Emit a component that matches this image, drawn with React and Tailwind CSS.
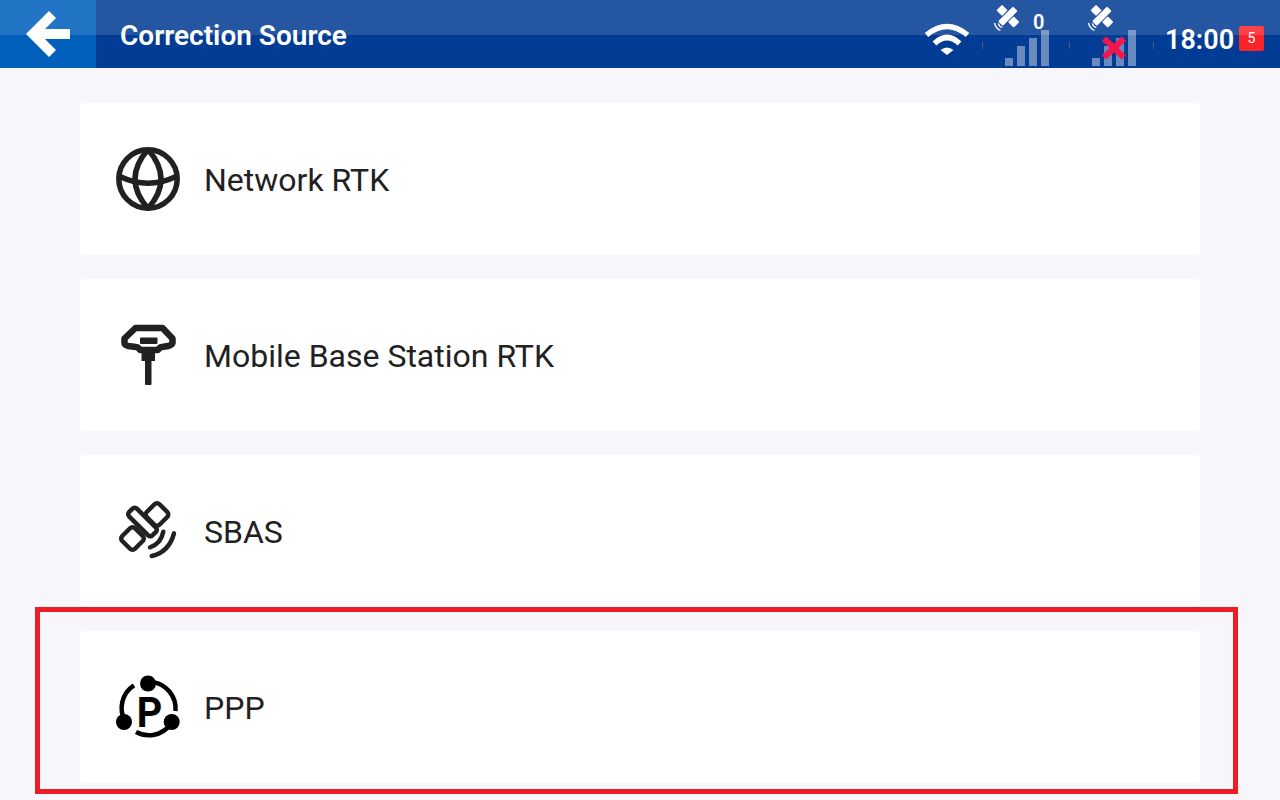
const DARK = "#212121";

function SmallSat({ x }) {
  return (
    <g transform={`translate(${x} 6)`} fill="#fff">
      <g transform="rotate(-45 13.7 10)">
        <rect x="3.2" y="7" width="21" height="6.5" rx="1" />
        <rect x="9.7" y="-2" width="8" height="8" rx="1" />
        <rect x="9.7" y="14.5" width="8" height="8" rx="1" />
      </g>
      <path d="M4.3 17.3 Q5 20.5 8.3 21.3" fill="none" stroke="#fff" strokeWidth="1.3" />
      <path d="M0.5 17 Q2 23 6.5 24.5" fill="none" stroke="#fff" strokeWidth="1.3" />
    </g>
  );
}

function Signal({ satX, cross, label }) {
  return (
    <div className="relative h-[68px] w-[70px]">
      <svg width="70" height="68" viewBox="0 0 70 68" className="block">
        <SmallSat x={satX} />
        <g fill="#fff" fillOpacity="0.4">
          <rect x="15" y="58" width="8" height="8" />
          <rect x="27" y="46" width="8" height="20" />
          <rect x="39" y="38" width="8" height="28" />
          <rect x="51" y="30" width="8" height="36" />
        </g>
        {cross && (
          <path d="M27 38.5 L47 57.5 M47 38.5 L27 57.5" fill="none" stroke="#f5164f" strokeWidth="6" />
        )}
      </svg>
      {label && (
        <span className="absolute left-[43px] top-[10px] text-[20px] leading-[24px] font-semibold text-white">{label}</span>
      )}
    </div>
  );
}

function Divider() {
  return <div className="mt-[42px] h-[7px] w-px bg-[#4a5f88]" />;
}

function GlobeIcon() {
  return (
    <svg width="64" height="64" viewBox="0 0 64 64" fill="none" stroke={DARK} strokeWidth="5.5">
      <circle cx="32" cy="32" r="29.2" />
      <path d="M32 2.5 Q6 32 32 61.5 Q58 32 32 2.5" />
      <path d="M4 29.5 Q32 43 60 29.5" />
    </svg>
  );
}

function BaseIcon() {
  return (
    <svg width="64" height="64" viewBox="0 0 64 64" fill="none">
      <path
        d="M19.5 5 H46.5 L56.5 15.5 V20 Q56 22 52 23 L46 24 Q44 24 42 27 H24 Q22 24 20 24 L12 23 Q8.5 22 8.5 20 V15.5 Z"
        stroke={DARK}
        strokeWidth="6.5"
        strokeLinejoin="round"
      />
      <rect x="24" y="14.5" width="17.5" height="6.5" rx="1" fill={DARK} />
      <rect x="25.5" y="27" width="13.5" height="11" fill={DARK} />
      <rect x="29" y="36" width="6.5" height="26" rx="1" fill={DARK} />
    </svg>
  );
}

function SatIcon() {
  return (
    <svg width="64" height="64" viewBox="0 0 64 64" fill="none" stroke={DARK} strokeWidth="4.5">
      <rect x="10" y="17.5" width="33" height="11" rx="3" transform="rotate(45 26.5 23)" />
      <rect x="32" y="6.5" width="18" height="18" rx="3.5" transform="rotate(45 41 15.5)" />
      <rect x="7.5" y="30.5" width="18" height="18" rx="3.5" transform="rotate(45 16.5 39.5)" />
      <path d="M34 48.3 Q45 45 47.3 32.7" strokeLinecap="round" />
      <path d="M35.7 57 Q53 53 58 34.3" strokeLinecap="round" />
    </svg>
  );
}

function PppIcon() {
  return (
    <svg width="64" height="64" viewBox="0 0 64 64" fill="none">
      <path d="M36 7 A27 27 0 0 1 59.5 36" stroke="#000" strokeWidth="4.5" />
      <path d="M54 50 A27 27 0 0 1 20 57" stroke="#000" strokeWidth="4.5" />
      <path d="M9 46 A27 27 0 0 1 18 10.3" stroke="#000" strokeWidth="4.5" />
      <circle cx="32" cy="8.5" r="8" fill="#000" />
      <circle cx="8" cy="47" r="8" fill="#000" />
      <circle cx="55.7" cy="47" r="8" fill="#000" />
      <text
        x="0"
        y="0"
        transform="translate(33.5 52) scale(0.92 1)"
        textAnchor="middle"
        fontFamily="Roboto, sans-serif"
        fontWeight="700"
        fontSize="43"
        fill="#000"
      >
        P
      </text>
    </svg>
  );
}

const rows = [
  { label: "Network RTK", Icon: GlobeIcon },
  { label: "Mobile Base Station RTK", Icon: BaseIcon },
  { label: "SBAS", Icon: SatIcon },
  { label: "PPP", Icon: PppIcon },
];

export default function App() {
  return (
    <div className="relative h-[800px] w-[1280px] overflow-hidden bg-[#f6f6fb] font-['Roboto',sans-serif]">
      <header className="relative flex h-[68px] bg-[#033c94]">
        <div className="w-24 bg-[#0060bb]">
          <svg width="96" height="68" viewBox="0 0 96 68" className="block">
            <path d="M26 34 L49 11 L56 18 L45 29 H70 V39 H45 L56 50 L49 57 Z" fill="#fff" />
          </svg>
        </div>
        <h1 className="ml-6 text-[28px] font-semibold leading-[72px] text-white">Correction Source</h1>
        <div className="ml-auto flex pr-4">
          <svg width="44" height="32" viewBox="0 0 44 32" fill="none" className="mt-[23px]">
            <path d="M1.5 12 Q22 -5 42.5 12" stroke="#fff" strokeWidth="5.5" />
            <path d="M9.5 20.5 Q22 8.5 34.5 20.5" stroke="#fff" strokeWidth="5.5" />
            <path d="M15.5 27 Q22 22 28.5 27 L22 32 Z" fill="#fff" />
          </svg>
          <div className="ml-[13px]"><Divider /></div>
          <div className="ml-[7px]"><Signal satX={4} label="0" /></div>
          <div className="ml-[9px]"><Divider /></div>
          <div className="ml-[7px]"><Signal satX={11} cross /></div>
          <div className="ml-[6px]"><Divider /></div>
          <span className="ml-[11px] w-[69px] whitespace-nowrap text-[27px] font-semibold leading-[80px] text-white">18:00</span>
          <span className="ml-[5px] mt-[26px] flex h-[25px] w-[25px] items-center justify-center rounded-[2px] bg-[#f9252b] text-[14px] text-white">5</span>
        </div>
        <div className="pointer-events-none absolute inset-x-0 top-0 h-[35px] bg-white/[0.135]" />
      </header>
      <main className="flex flex-col gap-6 px-20 pt-[35px]">
        {rows.map(({ label, Icon }) => (
          <div key={label} className="flex h-[152px] items-center gap-6 rounded bg-white pl-9">
            <Icon />
            <span className="mt-[2px] text-[32px] leading-none text-[#212121]">{label}</span>
          </div>
        ))}
      </main>
      <div className="absolute left-[35px] top-[607px] h-[187px] w-[1203px] border-[5px] border-[#ee1c27]" />
    </div>
  );
}
